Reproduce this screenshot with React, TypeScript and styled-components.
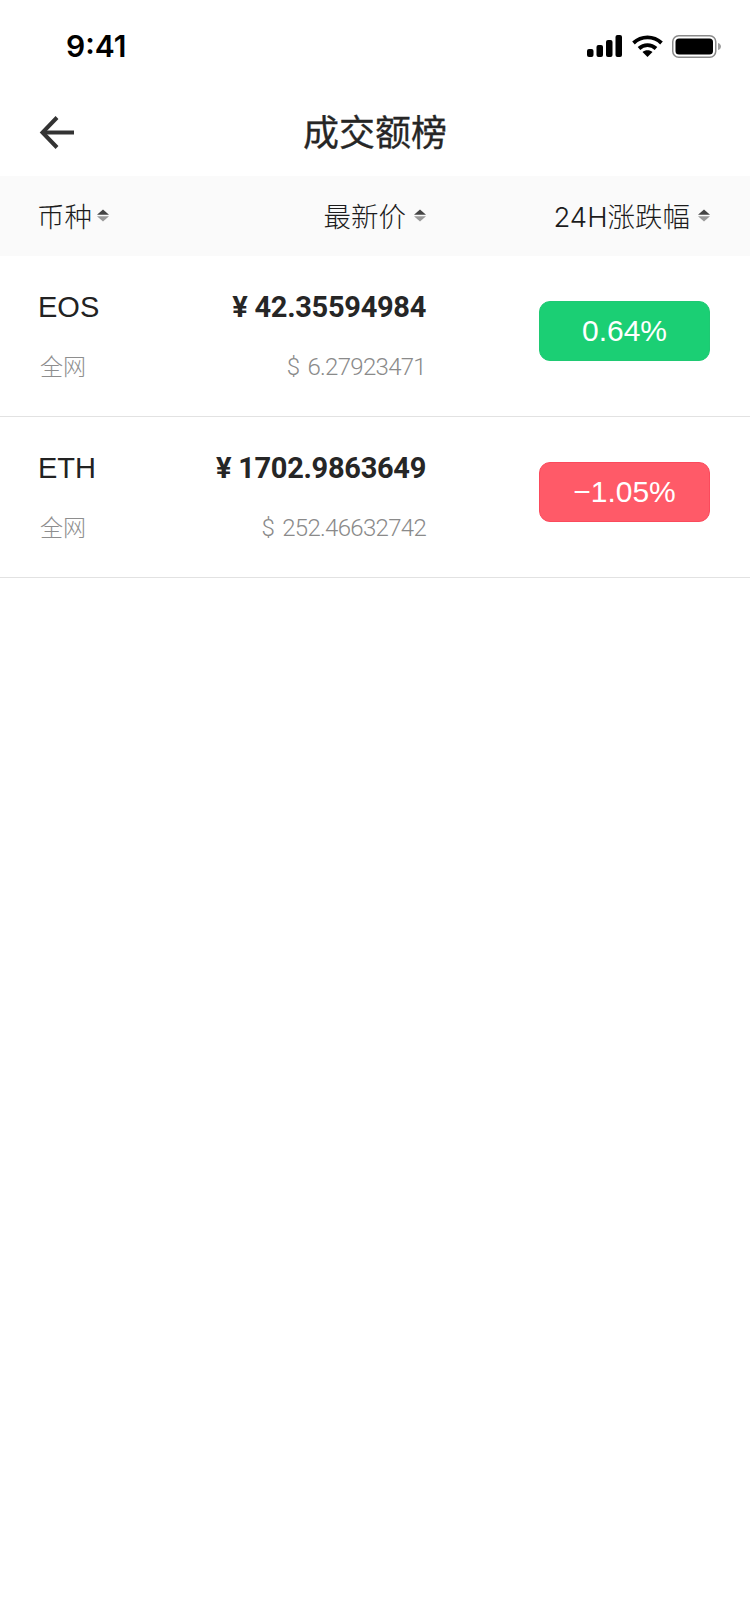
import React from 'react';
import styled, { createGlobalStyle } from 'styled-components';

const GlobalStyle = createGlobalStyle`
  html, body {
    margin: 0;
    padding: 0;
    background: #fff;
  }
  body {
    font-family: 'Liberation Sans', 'Noto Sans CJK SC', sans-serif;
  }
`;

const Screen = styled.div`
  width: 750px;
  height: 1624px;
  background: #fff;
  overflow: hidden;
`;

const StatusBar = styled.div`
  height: 88px;
  box-sizing: border-box;
  display: flex;
  align-items: flex-start;
  justify-content: space-between;
  padding: 27px 29px 0 66px;
`;

const Clock = styled.div`
  font-family: 'Inter', sans-serif;
  font-size: 30px;
  line-height: 38px;
  font-weight: 600;
  color: #000;
`;

const StatusIcons = styled.div`
  display: flex;
  align-items: center;
  gap: 9.5px;
  height: 38px;
`;

const NavBar = styled.div`
  height: 88px;
  position: relative;
  display: flex;
  align-items: center;
  justify-content: center;
`;

const BackButton = styled.div`
  position: absolute;
  left: 38px;
  top: 27px;
  width: 38px;
  height: 36px;
`;

const Title = styled.div`
  font-size: 36px;
  line-height: 48px;
  font-weight: 400;
  color: #262626;
  margin-top: 4px;
  -webkit-text-stroke: 0.3px #262626;
`;

const TableHead = styled.div`
  height: 80px;
  background: #fafafa;
  display: flex;
  align-items: center;
  padding: 0 40px 0 37px;
  font-family: 'Inter', 'Noto Sans CJK SC', sans-serif;
  font-size: 27.5px;
  font-weight: 300;
  color: #1c1c1c;
`;

const HeadCell = styled.div<{ $width: number; $right?: boolean }>`
  width: ${p => p.$width}px;
  display: flex;
  align-items: center;
  justify-content: ${p => (p.$right ? 'flex-end' : 'flex-start')};
  gap: ${p => (p.$right ? 8 : 5)}px;
  white-space: nowrap;
  line-height: 36px;
  margin-top: 2px;
`;

const SortSvg = styled.svg`
  margin-top: -3px;
`;

const Row = styled.div`
  height: 161px;
  box-sizing: border-box;
  border-bottom: 1px solid #e2e2e2;
  padding: 27px 40px 0 38px;
  display: flex;
  align-items: flex-start;
`;

const Coin = styled.div`
  width: 120px;
  padding-top: 1px;
`;

const CoinName = styled.div`
  font-size: 29px;
  line-height: 46px;
  color: #222;
`;

const Market = styled.div`
  font-size: 23px;
  font-weight: 300;
  line-height: 34px;
  margin-top: 20px;
  padding-left: 2px;
  color: #8e8e8e;
`;

const Price = styled.div`
  width: 268px;
  text-align: right;
`;

const PriceMain = styled.div`
  font-family: 'Roboto', sans-serif;
  font-size: 29px;
  line-height: 48px;
  font-weight: 700;
  letter-spacing: -0.3px;
  color: #262626;
  white-space: nowrap;
`;

const PriceSub = styled.div`
  font-family: 'Roboto', sans-serif;
  font-size: 24px;
  font-weight: 300;
  line-height: 34px;
  margin-top: 19px;
  letter-spacing: -0.7px;
  word-spacing: 3px;
  color: #8a8a8a;
  white-space: nowrap;
`;

const Badge = styled.div<{ $up: boolean }>`
  width: 171px;
  height: 60px;
  box-sizing: border-box;
  margin: 18px 0 0 auto;
  border-radius: 11px;
  border: 1px solid ${p => (p.$up ? '#1fc973' : '#fb4a5c')};
  background: ${p => (p.$up ? '#1bcf74' : '#ff5a68')};
  color: #fff;
  font-size: 30px;
  display: flex;
  align-items: center;
  justify-content: center;
`;

const SortIcon = () => (
  <SortSvg width="12" height="13" viewBox="0 0 12 13">
    <path d="M6 0.5 L12 5.8 H0 Z" fill="#444" />
    <path d="M6 12.5 L12 7.2 H0 Z" fill="#999" />
  </SortSvg>
);

const BackIcon = () => (
  <svg width="38" height="36" viewBox="0 0 38 36" fill="none">
    <path d="M36 17.5 H5" stroke="#333" strokeWidth="4" />
    <path d="M19 2.5 L4.5 17.5 L19 32.5" stroke="#333" strokeWidth="4" />
  </svg>
);

const SignalIcon = () => (
  <svg width="35" height="22" viewBox="0 0 35 22" fill="#000">
    <rect x="0" y="14" width="6.5" height="8" rx="2" />
    <rect x="9.5" y="10" width="6.5" height="12" rx="2" />
    <rect x="19" y="5" width="6.5" height="17" rx="2" />
    <rect x="28.5" y="0" width="6.5" height="22" rx="2" />
  </svg>
);

const WifiIcon = () => (
  <svg width="31" height="22" viewBox="0 0 31 22" fill="none">
    <path d="M1.5 8 C9.5 0.5 21.5 0.5 29.5 8" stroke="#000" strokeWidth="3.8" />
    <path d="M7 13.5 C11.8 9 19.2 9 24 13.5" stroke="#000" strokeWidth="3.8" />
    <path d="M15.5 22 L10.5 17 C13.2 14.7 17.8 14.7 20.5 17 Z" fill="#000" />
  </svg>
);

const BatteryIcon = () => (
  <svg width="49" height="23" viewBox="0 0 49 23" fill="none">
    <rect x="0.75" y="0.75" width="43" height="21.5" rx="6" stroke="#8a8a8a" strokeWidth="1.5" />
    <rect x="3.5" y="3.5" width="37.5" height="16" rx="3.5" fill="#000" />
    <path d="M46 8 C48 8.5 49 10 49 11.5 C49 13 48 14.5 46 15 Z" fill="#a0a0a0" />
  </svg>
);

const rows = [
  { coin: 'EOS', cny: '¥ 42.35594984', usd: '$ 6.27923471', change: '0.64%', up: true },
  { coin: 'ETH', cny: '¥ 1702.9863649', usd: '$ 252.46632742', change: '−1.05%', up: false },
];

export default function App() {
  return (
    <Screen>
      <GlobalStyle />
      <StatusBar>
        <Clock>9:41</Clock>
        <StatusIcons>
          <SignalIcon />
          <WifiIcon />
          <BatteryIcon />
        </StatusIcons>
      </StatusBar>
      <NavBar>
        <BackButton>
          <BackIcon />
        </BackButton>
        <Title>成交额榜</Title>
      </NavBar>
      <TableHead>
        <HeadCell $width={121}>币种<SortIcon /></HeadCell>
        <HeadCell $width={268} $right>最新价<SortIcon /></HeadCell>
        <HeadCell $width={284} $right>24H涨跌幅<SortIcon /></HeadCell>
      </TableHead>
      {rows.map(r => (
        <Row key={r.coin}>
          <Coin>
            <CoinName>{r.coin}</CoinName>
            <Market>全网</Market>
          </Coin>
          <Price>
            <PriceMain>{r.cny}</PriceMain>
            <PriceSub>{r.usd}</PriceSub>
          </Price>
          <Badge $up={r.up}>{r.change}</Badge>
        </Row>
      ))}
    </Screen>
  );
}
